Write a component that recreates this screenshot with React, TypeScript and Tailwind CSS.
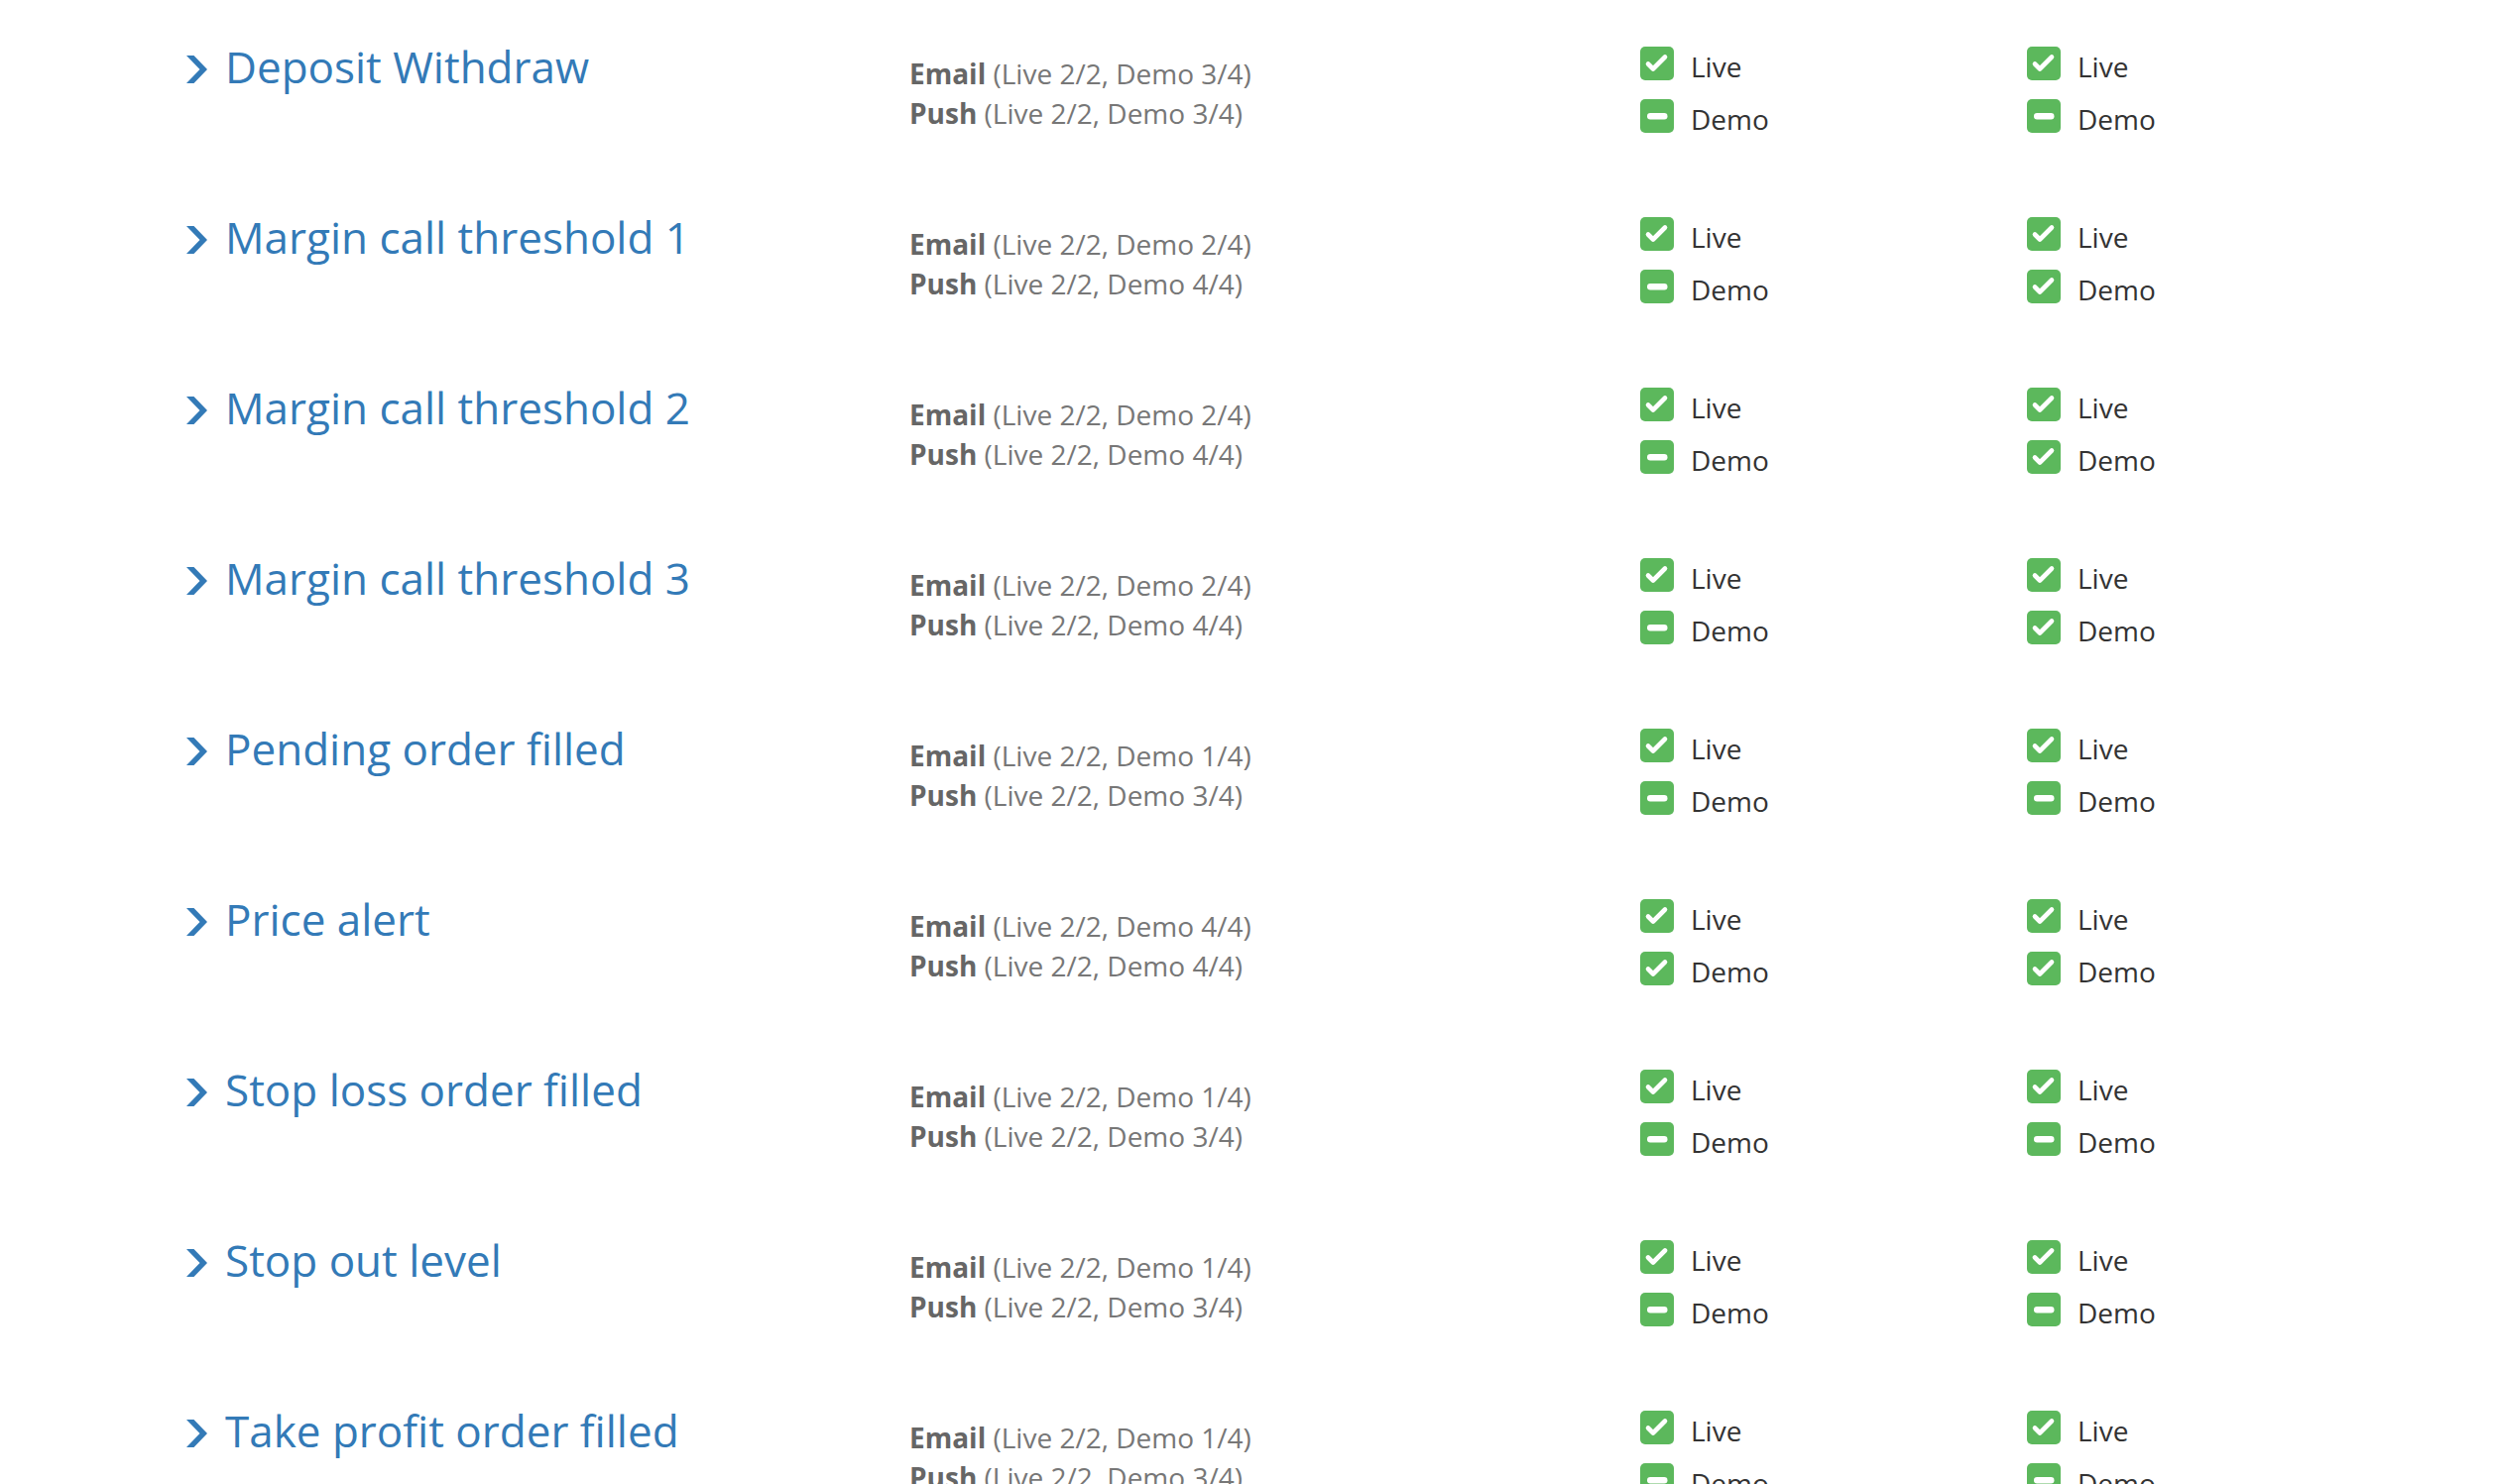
import * as React from "react";

type Row = {
  title: string;
  email: string;
  push: string;
  first: [boolean, boolean];
  second: [boolean, boolean];
};

const rows: Row[] = [
  { title: "Deposit Withdraw", email: "(Live 2/2, Demo 3/4)", push: "(Live 2/2, Demo 3/4)", first: [true, false], second: [true, false] },
  { title: "Margin call threshold 1", email: "(Live 2/2, Demo 2/4)", push: "(Live 2/2, Demo 4/4)", first: [true, false], second: [true, true] },
  { title: "Margin call threshold 2", email: "(Live 2/2, Demo 2/4)", push: "(Live 2/2, Demo 4/4)", first: [true, false], second: [true, true] },
  { title: "Margin call threshold 3", email: "(Live 2/2, Demo 2/4)", push: "(Live 2/2, Demo 4/4)", first: [true, false], second: [true, true] },
  { title: "Pending order filled", email: "(Live 2/2, Demo 1/4)", push: "(Live 2/2, Demo 3/4)", first: [true, false], second: [true, false] },
  { title: "Price alert", email: "(Live 2/2, Demo 4/4)", push: "(Live 2/2, Demo 4/4)", first: [true, true], second: [true, true] },
  { title: "Stop loss order filled", email: "(Live 2/2, Demo 1/4)", push: "(Live 2/2, Demo 3/4)", first: [true, false], second: [true, false] },
  { title: "Stop out level", email: "(Live 2/2, Demo 1/4)", push: "(Live 2/2, Demo 3/4)", first: [true, false], second: [true, false] },
  { title: "Take profit order filled", email: "(Live 2/2, Demo 1/4)", push: "(Live 2/2, Demo 3/4)", first: [true, false], second: [true, false] },
];

const CheckBox = ({ checked }: { checked: boolean }) => (
  <svg width="34" height="34" viewBox="0 0 34 34" className="shrink-0">
    <rect x="0" y="0" width="34" height="34" rx="5" fill="#5cb85c" />
    {checked ? (
      <path d="M8 17.5 L13 22.5 L25 10.5" fill="none" stroke="#fff" strokeWidth="4.6" strokeLinecap="round" strokeLinejoin="round" />
    ) : (
      <rect x="7" y="14" width="20.5" height="6.5" rx="3.2" fill="#fff" />
    )}
  </svg>
);

const Chevron = () => (
  <svg width="21" height="28" viewBox="0 0 21 28" className="shrink-0 mt-[13px]">
    <polygon points="0,0 7.5,0 21,14 7.5,28 0,28 13.5,14" fill="#337ab7" />
  </svg>
);

const Toggle = ({ label, checked }: { label: string; checked: boolean }) => (
  <div className="flex items-center gap-[17px] h-[34px]">
    <CheckBox checked={checked} />
    <span className="text-[28px] text-[#333] leading-none pt-[5px]">{label}</span>
  </div>
);

const Pair = ({ values }: { values: [boolean, boolean] }) => (
  <div className="flex flex-col gap-[19px] pt-[47px]">
    <Toggle label="Live" checked={values[0]} />
    <Toggle label="Demo" checked={values[1]} />
  </div>
);

export default function App() {
  return (
    <div
      className="h-[1497px] overflow-hidden bg-white pl-[188px]"
      style={{ fontFamily: '"Open Sans", sans-serif' }}
    >
      {rows.map((row) => (
        <div key={row.title} className="flex h-[172px]">
          <div className="w-[729px] flex items-start gap-[18px] mt-[43px] self-start">
            <Chevron />
            <span className="text-[44px] leading-[1.1] text-[#337ab7]">
              {row.title}
            </span>
          </div>
          <div className="w-[737px] pt-[54px] text-[28px] leading-[40px] text-[#777]">
            <div>
              <b className="font-bold text-[#666]">Email</b> {row.email}
            </div>
            <div>
              <b className="font-bold text-[#666]">Push</b> {row.push}
            </div>
          </div>
          <div className="w-[390px]">
            <Pair values={row.first} />
          </div>
          <div>
            <Pair values={row.second} />
          </div>
        </div>
      ))}
    </div>
  );
}
